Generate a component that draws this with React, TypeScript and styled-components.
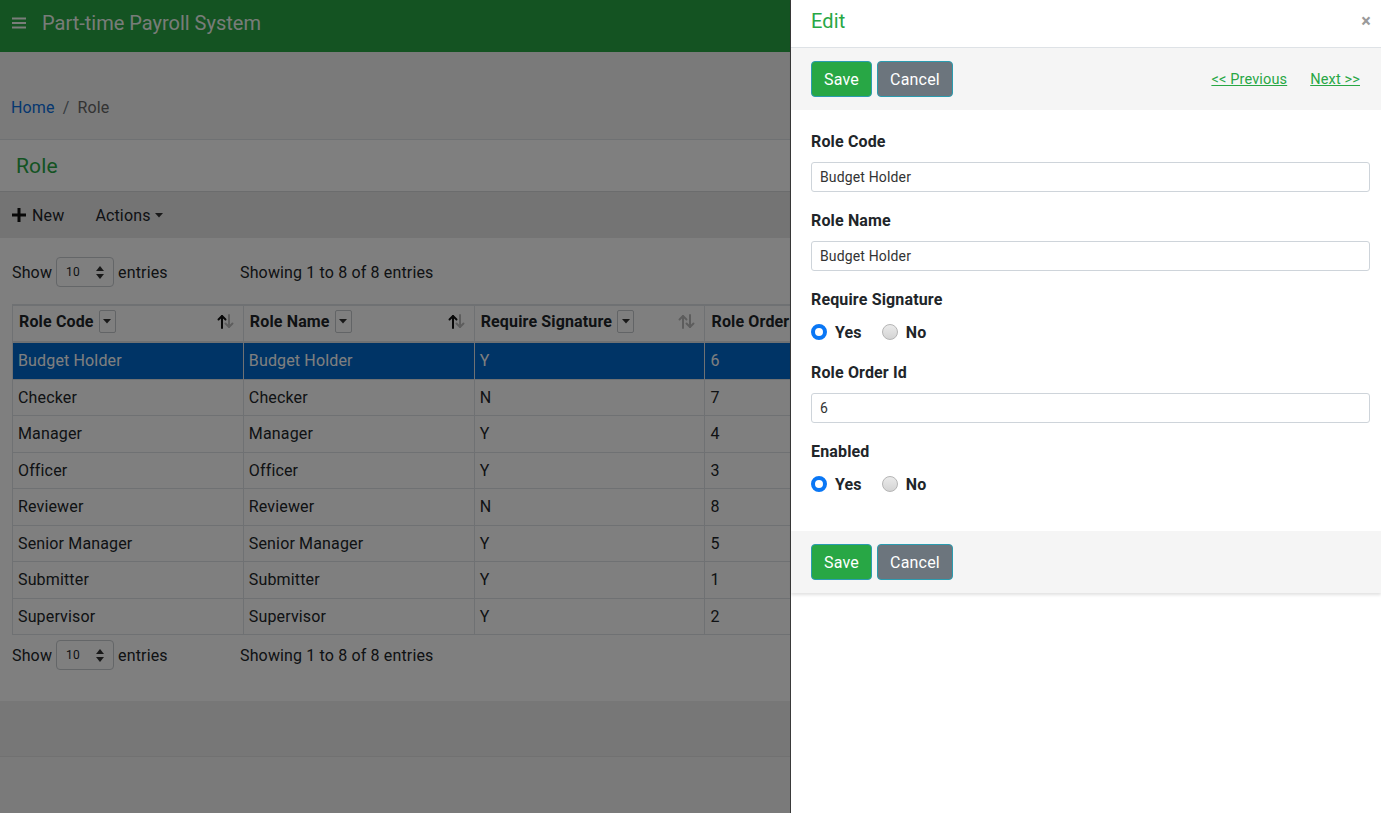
import React from "react";
import styled, { createGlobalStyle } from "styled-components";

const GlobalStyle = createGlobalStyle`
  html, body { margin: 0; padding: 0; }
  body {
    font-family: Roboto, "Liberation Sans", Arial, sans-serif;
    font-size: 16px;
    color: #212529;
    background: #f4f4f4;
    letter-spacing: 0.15px;
  }
  * { box-sizing: border-box; }
`;

const Page = styled.div`
  min-height: 813px;
  display: flex;
  flex-direction: column;
  background: #f4f4f4;
`;

const Navbar = styled.header`
  height: 52px;
  background: #28a745;
  display: flex;
  align-items: center;
  padding: 0 12px;
  gap: 16px;
  color: #fff;
`;

const Brand = styled.div`
  font-size: 20px;
  letter-spacing: 0;
  color: rgba(255, 255, 255, 0.95);
  margin-top: -7px;
`;

const BreadcrumbBar = styled.nav`
  height: 88px;
  display: flex;
  align-items: flex-end;
  padding: 0 12px 22px 11px;
  font-size: 16px;
  border-bottom: 1px solid #dfe3e7;
  gap: 8px;
  color: #6c757d;
`;

const Crumb = styled.a`
  color: #0a6fe0;
  text-decoration: none;
`;

const CrumbCurrent = styled.span`
  color: #666;
`;

const TitleStrip = styled.div`
  height: 52px;
  background: #fff;
  border-bottom: 1px solid #d6d8da;
  display: flex;
  align-items: center;
  padding: 0 16px;
  font-size: 21px;
  color: #28a745;
`;

const Toolbar = styled.div`
  height: 46px;
  background: #e8e8e8;
  display: flex;
  align-items: center;
  padding: 0 12px;
  gap: 31px;
  font-size: 16px;
`;

const ToolItem = styled.span<{ $gap: number }>`
  display: inline-flex;
  align-items: center;
  gap: ${(p) => p.$gap}px;
  color: #212529;
`;

const Content = styled.section`
  background: #fff;
  padding: 19px 12px 31px;
`;

const LengthRow = styled.div<{ $top?: number }>`
  display: flex;
  align-items: center;
  height: 30px;
  font-size: 16px;
  margin-top: ${(p) => p.$top ?? 0}px;
`;

const LengthLabel = styled.div`
  display: flex;
  align-items: center;
  gap: 4px;
  width: 228px;
`;

const SelectBox = styled.div`
  width: 58px;
  height: 30px;
  border: 1px solid #c8ccd0;
  border-radius: 4px;
  display: flex;
  align-items: center;
  justify-content: space-between;
  padding: 0 9px;
  font-size: 12px;
  background: #fff;
`;

const TableWrap = styled.div`
  margin-top: 17px;
  width: 1386px;
`;

const Table = styled.table`
  border-collapse: collapse;
  width: 100%;
  table-layout: fixed;
  font-size: 16px;
`;

const Th = styled.th`
  text-align: left;
  font-weight: 700;
  padding: 3px 6px 7px;
  border: 1px solid #dee2e6;
  border-top-width: 2px;
  border-bottom-width: 2px;
  height: 37px;
  white-space: nowrap;
  overflow: hidden;
`;

const ThInner = styled.div`
  display: flex;
  align-items: center;
`;

const FilterBtn = styled.span`
  display: inline-flex;
  align-items: center;
  justify-content: center;
  width: 17px;
  height: 23px;
  border: 1px solid #c4c8cc;
  border-radius: 2px;
  margin-left: 5px;
  background: #fff;
`;

const SortIcon = styled.span`
  margin-left: auto;
  display: inline-flex;
  margin-right: 3px;
`;

const Tr = styled.tr<{ $selected?: boolean }>`
  background: ${(p) => (p.$selected ? "#0068cc" : "#fff")};
  color: ${(p) => (p.$selected ? "#fff" : "#212529")};
`;

const Td = styled.td`
  padding: 6px 5px;
  line-height: 23.5px;
  border: 1px solid #dee2e6;
  white-space: nowrap;
  overflow: hidden;
`;

const Info = styled.div``;

const PageFooterGap = styled.div`
  height: 55px;
  background: #efefef;
`;

const Footer = styled.footer`
  flex: 1;
  border-top: 1px solid #e2e2e2;
  background: #f4f4f4;
`;

const Overlay = styled.div`
  position: fixed;
  inset: 0;
  background: rgba(0, 0, 0, 0.5);
`;

const Drawer = styled.aside`
  position: fixed;
  top: 0;
  right: 0;
  bottom: 0;
  width: 591px;
  background: #fff;
  border-left: 1px solid #3a3a3a;
`;

const DrawerCard = styled.div`
  box-shadow: 0 2px 3px rgba(0, 0, 0, 0.12);
`;

const DrawerHeader = styled.div`
  height: 48px;
  border-bottom: 1px solid #dee2e6;
  display: flex;
  align-items: center;
  justify-content: space-between;
  padding: 0 10px 5px 20px;
`;

const DrawerTitle = styled.h5`
  margin: 0;
  font-size: 20px;
  font-weight: 400;
  color: #28a745;
`;

const CloseBtn = styled.span`
  font-size: 18px;
  font-weight: 700;
  color: #9a9a9a;
  line-height: 1;
`;

const ActionBand = styled.div`
  background: #f5f5f5;
  padding: 13px 21px 13px 20px;
  display: flex;
  align-items: center;
  gap: 5px;
`;

const Button = styled.button<{ $variant: "save" | "cancel" }>`
  height: 36px;
  padding: 0 12px;
  font-family: inherit;
  letter-spacing: 0.2px;
  font-size: 16px;
  color: #fff;
  border-radius: 4px;
  border: 1px solid #2b9cb0;
  background: ${(p) => (p.$variant === "save" ? "#28a745" : "#6c757d")};
`;

const Pager = styled.div`
  margin-left: auto;
  display: flex;
  gap: 23px;
  font-size: 14.5px;
`;

const PagerLink = styled.a`
  color: #28a745;
  text-decoration: underline;
`;

const Form = styled.div`
  padding: 20px 11px 18px 20px;
`;

const Group = styled.div`
  margin-bottom: 17px;
`;

const Label = styled.div`
  font-weight: 700;
  font-size: 16px;
  line-height: 24px;
  margin-bottom: 8px;
`;

const Input = styled.div`
  height: 30px;
  border: 1px solid #ced4da;
  border-radius: 3px;
  display: flex;
  align-items: center;
  padding: 0 8px;
  font-size: 14px;
  color: #333;
`;

const RadioRow = styled.div`
  display: flex;
  align-items: center;
  height: 24px;
  gap: 20px;
`;

const RadioOption = styled.label`
  display: inline-flex;
  align-items: center;
  gap: 8px;
  font-weight: 700;
  font-size: 16px;
`;

const RadioDot = styled.span<{ $checked?: boolean }>`
  width: 16px;
  height: 16px;
  border-radius: 50%;
  display: inline-block;
  ${(p) =>
    p.$checked
      ? `background: #fff; border: 4.5px solid #0a77f5;`
      : `background: linear-gradient(#eaeaea, #d4d4d4); border: 1px solid #b5b5b5;`}
`;

const Hamburger = () => (
  <svg width="14" height="12" viewBox="0 0 14 12" style={{ marginTop: -6 }}>
    <rect x="0" y="0.5" width="14" height="2" fill="rgba(255,255,255,0.95)" />
    <rect x="0" y="5" width="14" height="2" fill="rgba(255,255,255,0.95)" />
    <rect x="0" y="9.5" width="14" height="2" fill="rgba(255,255,255,0.95)" />
  </svg>
);

const PlusIcon = () => (
  <svg width="14" height="14" viewBox="0 0 14 14">
    <rect x="5.5" y="0" width="3" height="14" fill="#111" />
    <rect x="0" y="5.5" width="14" height="3" fill="#111" />
  </svg>
);

const Caret = () => (
  <svg width="8" height="5" viewBox="0 0 8 5">
    <path d="M0 0 L8 0 L4 4.5 Z" fill="#333" />
  </svg>
);

const UpDown = () => (
  <svg width="8" height="13" viewBox="0 0 8 13">
    <path d="M4 0 L8 5 L0 5 Z" fill="#333" />
    <path d="M0 8 L8 8 L4 13 Z" fill="#333" />
  </svg>
);

const Sort = ({ active }: { active: boolean }) => (
  <svg width="17" height="15" viewBox="0 0 17 15">
    <g stroke={active ? "#111" : "#bbb"} strokeWidth="2" fill="none" strokeLinecap="round" strokeLinejoin="round">
      <path d="M5 14 V2" />
      <path d="M1.5 5.5 L5 2 L8.5 5.5" />
    </g>
    <g stroke="#bbb" strokeWidth="2" fill="none" strokeLinecap="round" strokeLinejoin="round">
      <path d="M12 1 V13" />
      <path d="M8.5 9.5 L12 13 L15.5 9.5" />
    </g>
  </svg>
);

const rows: [string, string, string][] = [
  ["Budget Holder", "Y", "6"],
  ["Checker", "N", "7"],
  ["Manager", "Y", "4"],
  ["Officer", "Y", "3"],
  ["Reviewer", "N", "8"],
  ["Senior Manager", "Y", "5"],
  ["Submitter", "Y", "1"],
  ["Supervisor", "Y", "2"],
];

const headers = ["Role Code", "Role Name", "Require Signature", "Role Order Id", "Enabled", "Created"];

const LengthControls = ({ top }: { top?: number }) => (
  <LengthRow $top={top}>
    <LengthLabel>
      Show
      <SelectBox>
        10
        <UpDown />
      </SelectBox>
      entries
    </LengthLabel>
    <Info>Showing 1 to 8 of 8 entries</Info>
  </LengthRow>
);

const ActionButtons = ({ pager }: { pager?: boolean }) => (
  <ActionBand>
    <Button $variant="save">Save</Button>
    <Button $variant="cancel">Cancel</Button>
    {pager && (
      <Pager>
        <PagerLink>&lt;&lt; Previous</PagerLink>
        <PagerLink>Next &gt;&gt;</PagerLink>
      </Pager>
    )}
  </ActionBand>
);

const Radio = ({ yes }: { yes: boolean }) => (
  <RadioRow>
    <RadioOption>
      <RadioDot $checked={yes} />
      Yes
    </RadioOption>
    <RadioOption>
      <RadioDot $checked={!yes} />
      No
    </RadioOption>
  </RadioRow>
);

export default function App() {
  return (
    <>
      <GlobalStyle />
      <Page>
        <Navbar>
          <Hamburger />
          <Brand>Part-time Payroll System</Brand>
        </Navbar>
        <BreadcrumbBar>
          <Crumb>Home</Crumb>
          <span>/</span>
          <CrumbCurrent>Role</CrumbCurrent>
        </BreadcrumbBar>
        <TitleStrip>Role</TitleStrip>
        <Toolbar>
          <ToolItem $gap={6}>
            <PlusIcon />
            New
          </ToolItem>
          <ToolItem $gap={4}>
            Actions
            <Caret />
          </ToolItem>
        </Toolbar>
        <Content>
          <LengthControls />
          <TableWrap>
            <Table>
              <thead>
                <tr>
                  {headers.map((h, i) => (
                    <Th key={h}>
                      <ThInner>
                        {h}
                        <FilterBtn>
                          <Caret />
                        </FilterBtn>
                        <SortIcon>
                          <Sort active={i < 2} />
                        </SortIcon>
                      </ThInner>
                    </Th>
                  ))}
                </tr>
              </thead>
              <tbody>
                {rows.map(([name, sig, order], i) => (
                  <Tr key={name} $selected={i === 0}>
                    <Td>{name}</Td>
                    <Td>{name}</Td>
                    <Td>{sig}</Td>
                    <Td>{order}</Td>
                    <Td>Y</Td>
                    <Td></Td>
                  </Tr>
                ))}
              </tbody>
            </Table>
          </TableWrap>
          <LengthControls top={5} />
        </Content>
        <PageFooterGap />
        <Footer />
      </Page>
      <Overlay />
      <Drawer>
        <DrawerCard>
          <DrawerHeader>
            <DrawerTitle>Edit</DrawerTitle>
            <CloseBtn>×</CloseBtn>
          </DrawerHeader>
          <ActionButtons pager />
          <Form>
            <Group>
              <Label>Role Code</Label>
              <Input>Budget Holder</Input>
            </Group>
            <Group>
              <Label>Role Name</Label>
              <Input>Budget Holder</Input>
            </Group>
            <Group>
              <Label>Require Signature</Label>
              <Radio yes />
            </Group>
            <Group>
              <Label>Role Order Id</Label>
              <Input>6</Input>
            </Group>
            <Group>
              <Label>Enabled</Label>
              <Radio yes />
            </Group>
          </Form>
          <ActionButtons />
        </DrawerCard>
      </Drawer>
    </>
  );
}
